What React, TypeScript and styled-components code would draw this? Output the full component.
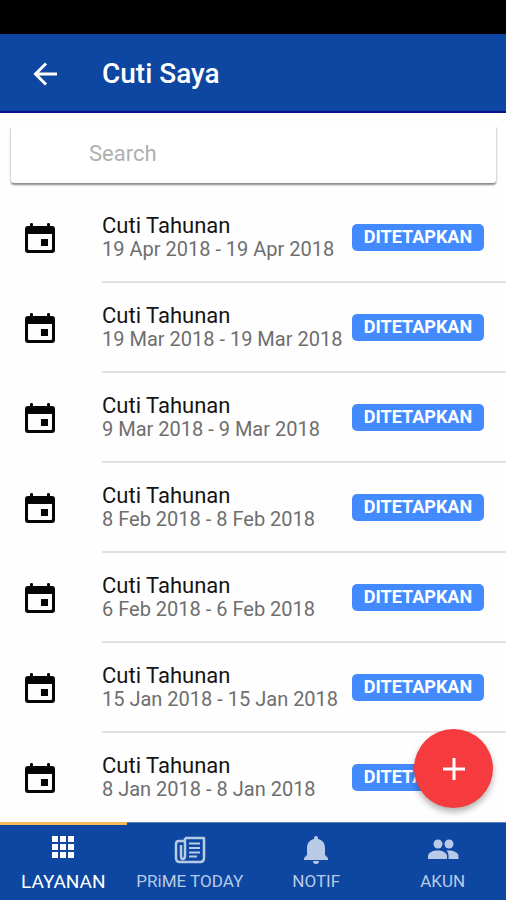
import React from "react";
import styled, { createGlobalStyle } from "styled-components";

const GlobalStyle = createGlobalStyle`
  * { box-sizing: border-box; }
  body {
    margin: 0;
    background: #fefefe;
    color: #141414;
    font-family: Roboto, "Liberation Sans", sans-serif;
  }
  button, input { font: inherit; }
`;

const Screen = styled.div`
  display: flex;
  flex-direction: column;
  height: 100vh;
`;

const StatusBar = styled.div`
  flex: none;
  height: 34px;
  background: #000;
`;

const AppBar = styled.header`
  flex: none;
  display: flex;
  align-items: center;
  height: 79px;
  padding: 2px 0 0 30px;
  gap: 42px;
  background: #0d47a1;
  border-bottom: 2px solid #06128c;
`;

const BackButton = styled.button`
  display: flex;
  padding: 0;
  border: 0;
  background: none;
  color: #fff;
  cursor: pointer;
`;

const Title = styled.h1`
  margin: 0;
  font-size: 28px;
  line-height: 32px;
  font-weight: 500;
  color: #fff;
`;

const SearchCard = styled.label`
  flex: none;
  display: flex;
  height: 58px;
  margin: 12px 10px 10px 11px;
  padding: 0 16px 2px 78px;
  border-radius: 3px;
  background: #fff;
  box-shadow: 0 2px 2px rgba(0, 0, 0, 0.42), 0 1px 3px rgba(0, 0, 0, 0.12);
  clip-path: inset(0 -4px -8px -4px);
`;

const SearchInput = styled.input`
  flex: 1;
  min-width: 0;
  padding: 0;
  border: 0;
  outline: 0;
  background: none;
  font-size: 22px;
  color: #141414;
  &::placeholder { color: #b0b0b0; opacity: 1; }
`;

const Main = styled.main`
  position: relative;
  flex: 1;
  min-height: 0;
`;

const LeaveList = styled.ul`
  height: 100%;
  margin: 0;
  padding: 0;
  list-style: none;
  overflow-y: auto;
  scrollbar-width: none;
`;

const LeaveRow = styled.li`
  display: flex;
  align-items: center;
  height: 90px;
  padding-left: 22px;
  gap: 44px;
`;

const RowBody = styled.div`
  flex: 1;
  display: flex;
  align-items: center;
  justify-content: space-between;
  height: 90px;
  padding-right: 22px;
  border-bottom: 2px solid #e2e2e2;

  ${LeaveRow}:last-child & { border-bottom-color: transparent; }
`;

const LeaveType = styled.div`
  font-size: 22px;
  line-height: 24px;
`;

const LeaveDates = styled.div`
  font-size: 20px;
  line-height: 22px;
  white-space: nowrap;
  color: #6e6e6e;
`;

const StatusBadge = styled.span`
  width: 132px;
  height: 27px;
  border-radius: 5px;
  background: #448aff;
  color: #fff;
  font-size: 18px;
  line-height: 25px;
  font-weight: 700;
  text-align: center;
`;

const AddButton = styled.button`
  position: absolute;
  right: 13px;
  bottom: 14px;
  display: flex;
  align-items: center;
  justify-content: center;
  width: 79px;
  height: 79px;
  padding: 0;
  border: 0;
  border-radius: 50%;
  background: #f53b3d;
  color: #fff;
  box-shadow: 0 4px 6px rgba(0, 0, 0, 0.3);
  cursor: pointer;
`;

const TabBar = styled.nav`
  flex: none;
  display: grid;
  grid-template-columns: repeat(4, 1fr);
  height: 78px;
  background: #0d47a1;
`;

const Tab = styled.a<{ $active?: boolean }>`
  display: flex;
  flex-direction: column;
  align-items: center;
  padding-top: ${(p) => (p.$active ? "7px" : "11px")};
  gap: ${(p) => (p.$active ? "8px" : "3px")};
  border-top: ${(p) => (p.$active ? "3px solid #f2bd58" : "1px solid #5b80bd")};
  color: ${(p) => (p.$active ? "#fff" : "#b9cae6")};
  font-size: ${(p) => (p.$active ? "19px" : "17px")};
  line-height: 24px;
  white-space: nowrap;
  text-decoration: none;
`;

const CalendarIcon = () => (
  <svg width="36" height="36" viewBox="0 0 36 36" aria-hidden="true">
    <path
      fill="#050505"
      fillRule="evenodd"
      d="M8 4q0-1 1.500-1T11 4v2h14V4q0-1 1.500-1T28 4v2h2q3 0 3 3v21q0 3-3 3H6q-3 0-3-3V9q0-3 3-3h2zM6 14v15q0 1 1 1h22q1 0 1-1V14z"
    />
    <path fill="#050505" d="M19 19h7v7h-7z" />
  </svg>
);

const BackIcon = () => (
  <svg width="30" height="30" viewBox="0 0 30 30" fill="none" stroke="currentColor" strokeWidth="3" aria-hidden="true">
    <path d="M27 15H6M16 4.500L5.500 15L16 25.500" />
  </svg>
);

const PlusIcon = () => (
  <svg width="24" height="24" viewBox="0 0 24 24" stroke="currentColor" strokeWidth="3" aria-hidden="true">
    <path d="M1 12h22M12 1v22" />
  </svg>
);

const GridIcon = () => (
  <svg width="30" height="30" viewBox="0 0 30 30" fill="currentColor" aria-hidden="true">
    <path d="M4 4h6v6H4zM12 4h6v6h-6zM20 4h6v6h-6zM4 12h6v6H4zM12 12h6v6h-6zM20 12h6v6h-6zM4 20h6v6H4zM12 20h6v6h-6zM20 20h6v6h-6z" />
  </svg>
);

const NewsIcon = () => (
  <svg width="34" height="32" viewBox="0 0 34 32" fill="none" stroke="currentColor" strokeWidth="2.500" aria-hidden="true">
    <path d="M12 4H31V24Q31 28 27 28H7Q3 28 3 24V10Q3 7 6 7H12M12 4V22Q12 25 9.500 25Q8 25 8 22V11" strokeLinejoin="round" />
    <path d="M16 9.500h11M16 14h11M16 18.500h11M16 22.500h8" strokeWidth="2" />
  </svg>
);

const BellIcon = () => (
  <svg width="32" height="32" viewBox="0 0 32 32" fill="currentColor" aria-hidden="true">
    <path d="M14 4a2 2 0 0 1 4 0v1c4.800 1 7 4.800 7 9v7l3 3v2H4v-2l3-3v-7c0-4.200 2.200-8 7-9zM13 27h6a3 3 0 0 1-6 0z" />
  </svg>
);

const PeopleIcon = () => (
  <svg width="34" height="32" viewBox="0 0 34 32" fill="currentColor" aria-hidden="true">
    <circle cx="12" cy="10" r="4.500" />
    <circle cx="23" cy="10" r="4.500" />
    <path d="M2 25v-3c0-3.500 5-5.500 9.500-5.500S21 18.500 21 22v3z" />
    <path d="M20.500 16.600c5-.7 12 1.300 12 5.400v3h-10v-3c0-2.200-.7-4-2-5.400z" />
  </svg>
);

const leaves = [
  "19 Apr 2018 - 19 Apr 2018",
  "19 Mar 2018 - 19 Mar 2018",
  "9 Mar 2018 - 9 Mar 2018",
  "8 Feb 2018 - 8 Feb 2018",
  "6 Feb 2018 - 6 Feb 2018",
  "15 Jan 2018 - 15 Jan 2018",
  "8 Jan 2018 - 8 Jan 2018",
];

const tabs = [
  { label: "LAYANAN", Icon: GridIcon, active: true },
  { label: "PRiME TODAY", Icon: NewsIcon },
  { label: "NOTIF", Icon: BellIcon },
  { label: "AKUN", Icon: PeopleIcon },
];

export default function App() {
  return (
    <Screen>
      <GlobalStyle />
      <StatusBar />
      <AppBar>
        <BackButton type="button" aria-label="Kembali">
          <BackIcon />
        </BackButton>
        <Title>Cuti Saya</Title>
      </AppBar>
      <SearchCard>
        <SearchInput type="text" placeholder="Search" aria-label="Search" />
      </SearchCard>
      <Main>
        <LeaveList>
          {leaves.map((dates) => (
            <LeaveRow key={dates}>
              <CalendarIcon />
              <RowBody>
                <div>
                  <LeaveType>Cuti Tahunan</LeaveType>
                  <LeaveDates>{dates}</LeaveDates>
                </div>
                <StatusBadge>DITETAPKAN</StatusBadge>
              </RowBody>
            </LeaveRow>
          ))}
        </LeaveList>
        <AddButton type="button" aria-label="Tambah cuti">
          <PlusIcon />
        </AddButton>
      </Main>
      <TabBar>
        {tabs.map(({ label, Icon, active }) => (
          <Tab key={label} href="#" $active={active} aria-current={active ? "page" : undefined}>
            <Icon />
            {label}
          </Tab>
        ))}
      </TabBar>
    </Screen>
  );
}
